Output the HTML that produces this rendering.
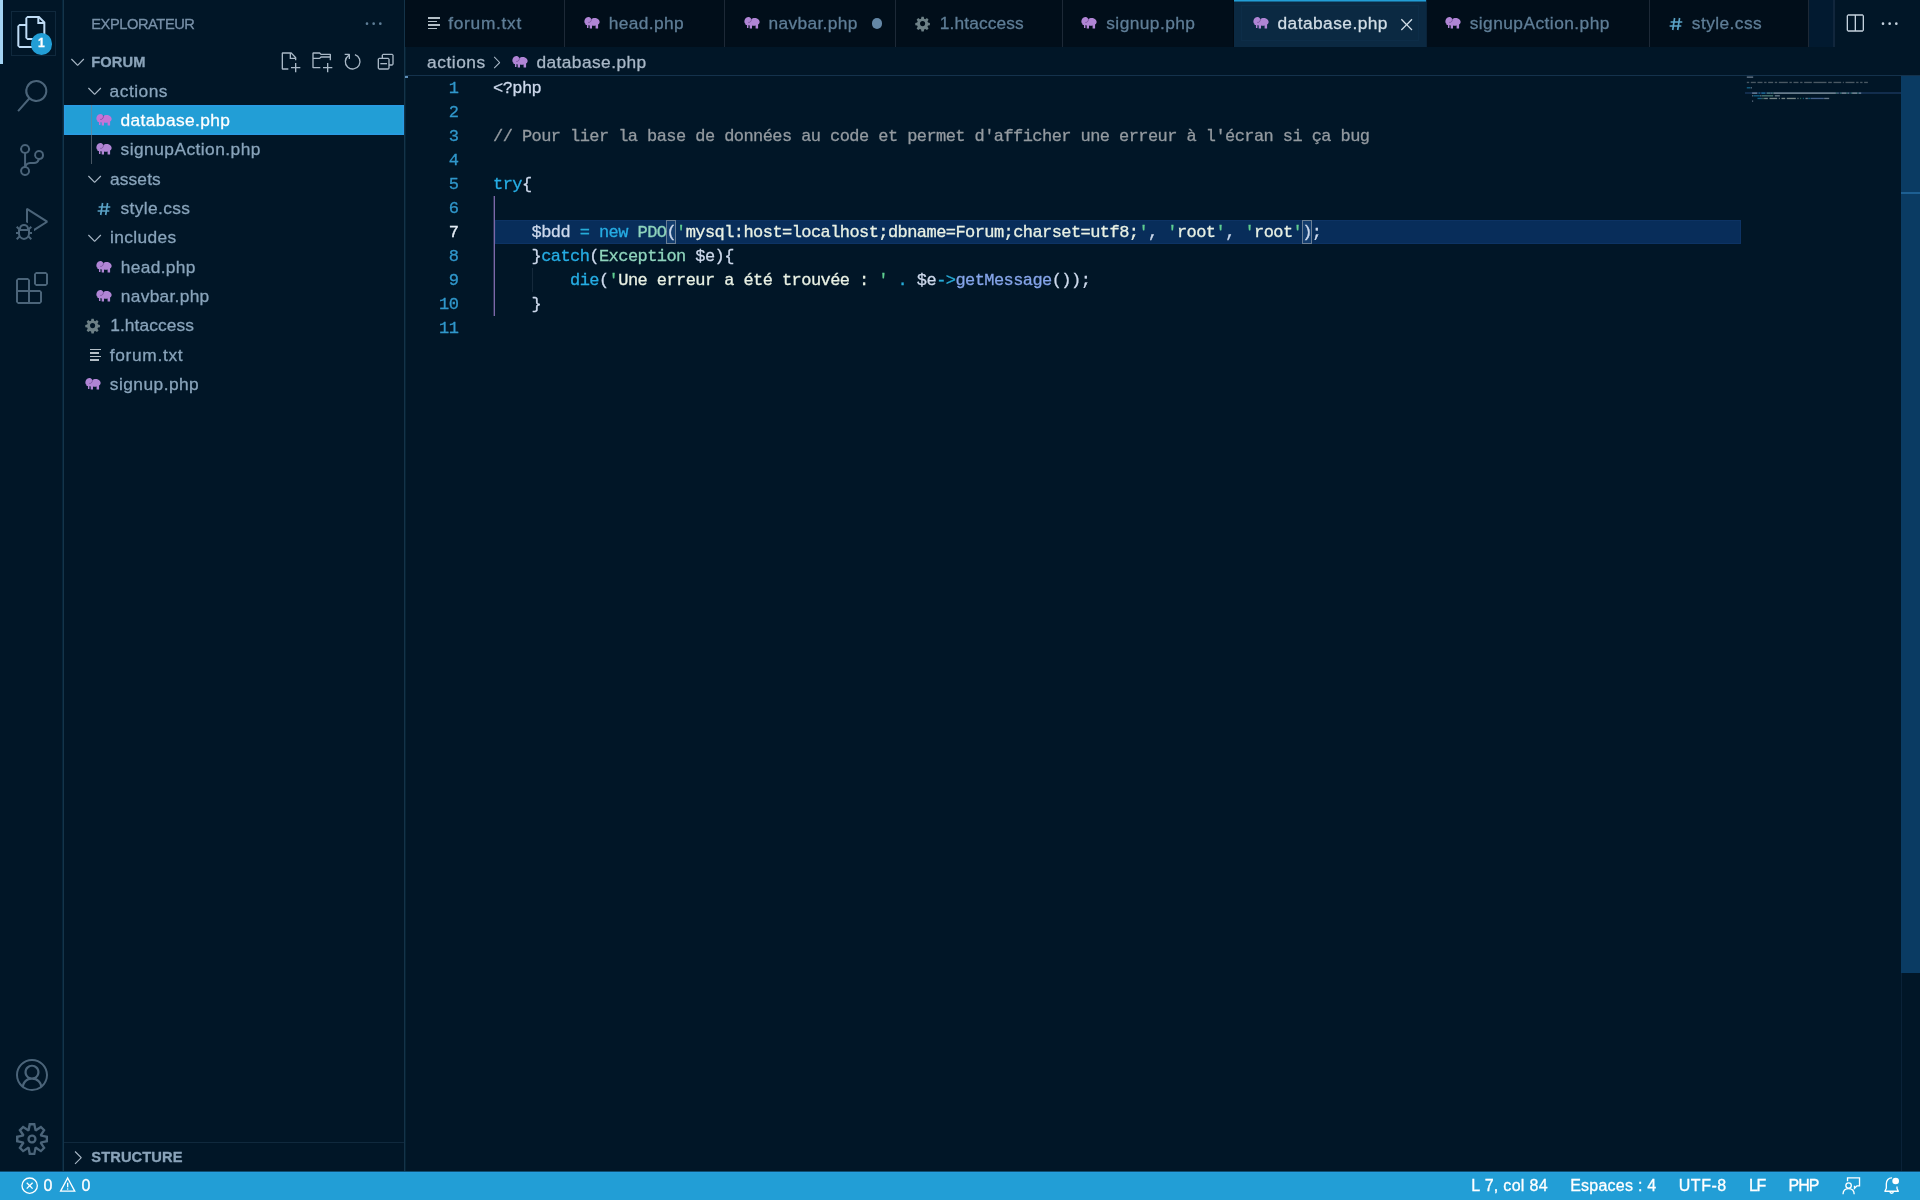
<!DOCTYPE html>
<html><head><meta charset="utf-8"><title>database.php — Forum</title>
<style>
html,body{margin:0;padding:0}
body{width:1920px;height:1200px;overflow:hidden;position:relative;background:#011627;font-family:"Liberation Sans",sans-serif;-webkit-font-smoothing:antialiased}
svg{display:block;overflow:visible}
#root{position:absolute;left:0;top:0;width:1920px;height:1200px;will-change:transform}
#root div{-webkit-text-stroke:.3px}
</style></head><body><div id="root">
<div style="position:absolute;left:63.00px;top:0.00px;width:1.00px;height:1171.00px;background:#153449;"></div>
<div style="position:absolute;left:62.00px;top:0.00px;width:1.00px;height:1171.00px;background:#04243a;"></div>
<div style="position:absolute;left:0.00px;top:0.00px;width:3.00px;height:64.00px;background:#a3d3f2;"></div>
<div style="position:absolute;left:11px;top:11px;width:45px;height:45px;border:1px solid #10293d;box-sizing:border-box"></div>
<svg style="position:absolute;left:16.00px;top:16.00px;color:#bfdcf5;" width="32.00" height="32.00" viewBox="0 0 24 24" fill="#bfdcf5"><path d="M17.5 0h-9L7 1.5V6H2.5L1 7.5v15.07L2.5 24h12.07L16 22.57V18h4.7l1.3-1.43V4.5L17.5 0zm0 2.12l2.38 2.38H17.5V2.12zm-3 20.38h-12v-15H7v9.07L8.5 18h6v4.5zm6-6h-12v-15H16V6h4.5v10.5z"/></svg>
<div style="position:absolute;left:30.5px;top:33px;width:21.5px;height:21.5px;border-radius:50%;background:#229ed6;color:#fff;font:bold 12px 'Liberation Sans',sans-serif;line-height:21.5px;text-align:center">1</div>
<svg style="position:absolute;left:16.00px;top:80.00px;color:#4b6479;" width="32.00" height="32.00" viewBox="0 0 24 24" fill="#4b6479"><path d="M15.25 0a8.25 8.25 0 0 0-6.18 13.72L1 22.88l1.12 1 8.05-9.12A8.251 8.251 0 1 0 15.25.01V0zm0 15a6.75 6.75 0 1 1 0-13.5 6.75 6.75 0 0 1 0 13.5z"/></svg>
<svg style="position:absolute;left:16.00px;top:144.00px;color:#4b6479;" width="32.00" height="32.00" viewBox="0 0 24 24" fill="#4b6479"><path d="M21.007 8.222A3.738 3.738 0 0 0 15.045 5.2a3.737 3.737 0 0 0 1.156 6.583 2.988 2.988 0 0 1-2.668 1.67h-2.99a4.456 4.456 0 0 0-2.989 1.165V7.4a3.737 3.737 0 1 0-1.494 0v9.117a3.776 3.776 0 1 0 1.816.099 2.99 2.99 0 0 1 2.668-1.667h2.99a4.484 4.484 0 0 0 4.223-3.039 3.736 3.736 0 0 0 3.25-3.687zM4.565 3.738a2.242 2.242 0 1 1 4.484 0 2.242 2.242 0 0 1-4.484 0zm4.484 16.441a2.242 2.242 0 1 1-4.484 0 2.242 2.242 0 0 1 4.484 0zm8.221-9.715a2.242 2.242 0 1 1 0-4.485 2.242 2.242 0 0 1 0 4.485z"/></svg>
<svg style="position:absolute;left:16.00px;top:208.00px;color:#4b6479;" width="32.00" height="32.00" viewBox="0 0 24 24" fill="#4b6479"><path d="M10.94 13.5l-1.32 1.32a3.73 3.73 0 0 0-7.24 0L1.06 13.5 0 14.56l1.72 1.72-.22.22V18H0v1.5h1.5v.08c.077.489.214.966.41 1.42L0 22.94 1.06 24l1.65-1.65A4.308 4.308 0 0 0 6 24a4.31 4.31 0 0 0 3.29-1.65L10.94 24 12 22.94 10.09 21c.198-.464.336-.951.41-1.45v-.1H12V18h-1.5v-1.5l-.22-.22L12 14.56l-1.06-1.06zM6 13.5a2.25 2.25 0 0 1 2.25 2.25h-4.5A2.25 2.25 0 0 1 6 13.5zm3 6a3.33 3.33 0 0 1-3 3 3.33 3.33 0 0 1-3-3v-2.25h6v2.25zm14.76-9.9v1.26L13.5 17.37V15.6l8.5-5.37L9 2v9.46a5.07 5.07 0 0 0-1.5-.72V.63L8.64 0l15.12 9.6z"/></svg>
<svg style="position:absolute;left:16.00px;top:272.00px;color:#4b6479;" width="32.00" height="32.00" viewBox="0 0 24 24" fill="#4b6479"><path d="M13.5 1.5L15 0h7.5L24 1.5V9l-1.5 1.5H15L13.5 9V1.5zm1.5 0V9h7.5V1.5H15zM0 15V6l1.5-1.5H9L10.5 6v7.5H18l1.5 1.5v7.5L18 24H1.5L0 22.5V15zm9-1.5V6H1.5v7.5H9zM9 15H1.5v7.5H9V15zm1.5 7.5H18V15h-7.5v7.5z"/></svg>
<svg style="position:absolute;left:16.00px;top:1058.67px;color:#4b6479;" width="32.00" height="32.00" viewBox="0 0 16 16" fill="#4b6479"><path d="M16 7.992C16 3.58 12.416 0 8 0S0 3.58 0 7.992c0 2.43 1.104 4.62 2.832 6.09.016.016.032.016.032.032.144.112.288.224.448.336.08.048.144.111.224.175A7.98 7.98 0 0 0 8.016 16a7.98 7.98 0 0 0 4.48-1.375c.08-.048.144-.111.224-.16.144-.111.304-.223.448-.335.016-.016.032-.016.032-.032 1.696-1.487 2.8-3.676 2.8-6.106zm-8 7.001c-1.504 0-2.88-.48-4.016-1.279.016-.128.048-.255.08-.383a4.17 4.17 0 0 1 .416-.991c.176-.304.384-.576.64-.816.24-.24.528-.463.816-.639.304-.176.624-.304.976-.4A4.15 4.15 0 0 1 8 10.342a4.185 4.185 0 0 1 2.928 1.166c.368.368.656.8.864 1.295.112.288.192.592.24.911A7.03 7.03 0 0 1 8 14.993zm-2.448-7.4a2.49 2.49 0 0 1-.208-1.024c0-.351.064-.703.208-1.023.144-.32.336-.607.576-.847.24-.24.528-.431.848-.575.32-.144.672-.208 1.024-.208.368 0 .704.064 1.024.208.32.144.608.336.848.575.24.24.432.528.576.847.144.32.208.672.208 1.023 0 .368-.064.704-.208 1.023a2.84 2.84 0 0 1-.576.848 2.84 2.84 0 0 1-.848.575 2.715 2.715 0 0 1-2.064 0 2.84 2.84 0 0 1-.848-.575 2.526 2.526 0 0 1-.56-.848zm7.424 5.306c0-.032-.016-.048-.016-.08a5.22 5.22 0 0 0-.688-1.406 4.883 4.883 0 0 0-1.088-1.135 5.207 5.207 0 0 0-1.04-.608 2.82 2.82 0 0 0 .464-.383 4.2 4.2 0 0 0 .624-.784 3.624 3.624 0 0 0 .528-1.934 3.71 3.71 0 0 0-.288-1.47 3.799 3.799 0 0 0-.816-1.199 3.845 3.845 0 0 0-1.2-.8 3.72 3.72 0 0 0-1.472-.287 3.72 3.72 0 0 0-1.472.288 3.631 3.631 0 0 0-1.2.815 3.84 3.84 0 0 0-.8 1.199 3.71 3.71 0 0 0-.288 1.47c0 .352.048.688.144 1.007.096.336.224.64.4.927.16.288.384.544.624.784.144.144.304.271.48.383a5.12 5.12 0 0 0-1.04.624c-.416.32-.784.703-1.088 1.119a4.999 4.999 0 0 0-.688 1.406c-.016.032-.016.064-.016.08C1.776 11.636.992 9.91.992 7.992.992 4.14 4.144.991 8 .991s7.008 3.149 7.008 7.001a6.96 6.96 0 0 1-2.032 4.907z"/></svg>
<svg style="position:absolute;left:16.00px;top:1122.67px;color:#4b6479;" width="32.00" height="32.00" viewBox="0 0 24 24" fill="#4b6479"><path fill-rule="evenodd" d="M19.85 8.75l4.15.83v4.84l-4.15.83 2.35 3.52-3.43 3.43-3.52-2.35-.83 4.15H9.58l-.83-4.15-3.52 2.35-3.43-3.43 2.35-3.52L0 14.42V9.58l4.15-.83L1.8 5.23 5.23 1.8l3.52 2.35L9.58 0h4.84l.83 4.15 3.52-2.35 3.43 3.43-2.35 3.52zm-1.57 5.07l4-.81v-2l-4-.81-.54-1.3 2.29-3.43-1.43-1.43-3.43 2.29-1.3-.54-.81-4h-2l-.81 4-1.3.54-3.43-2.29-1.43 1.43L6.38 8.9l-.54 1.3-4 .81v2l4 .81.54 1.3-2.29 3.43 1.43 1.43 3.43-2.29 1.3.54.81 4h2l.81-4 1.3-.54 3.43 2.29 1.43-1.43-2.29-3.43.54-1.3zm-8.186-4.672A3.43 3.43 0 0 1 12 8.57 3.44 3.44 0 0 1 15.43 12a3.43 3.43 0 1 1-5.336-2.852zm.956 4.274c.281.188.612.288.95.288A1.7 1.7 0 0 0 13.71 12a1.71 1.71 0 1 0-2.66 1.422z"/></svg>
<div style="position:absolute;left:404.00px;top:0.00px;width:1.00px;height:1171.00px;background:#143349;"></div>
<div style="position:absolute;left:405.00px;top:0.00px;width:1.00px;height:1171.00px;background:#052234;"></div>
<div style="position:absolute;left:91.25px;top:1.00px;height:46.67px;line-height:46.67px;font-size:14.67px;color:#7890a8;letter-spacing:-0.434px;font-weight:normal;white-space:pre;font-family:'Liberation Sans',sans-serif;">EXPLORATEUR</div>
<svg style="position:absolute;left:362.67px;top:13.33px;color:#5f7e97;" width="21.33" height="21.33" viewBox="0 0 16 16" fill="#5f7e97"><path d="M4 8a1 1 0 1 1-2 0 1 1 0 0 1 2 0zm5 0a1 1 0 1 1-2 0 1 1 0 0 1 2 0zm5 0a1 1 0 1 1-2 0 1 1 0 0 1 2 0z"/></svg>
<svg style="position:absolute;left:66.67px;top:50.67px;color:#a7b6c4;" width="21.33" height="21.33" viewBox="0 0 16 16" fill="#a7b6c4"><path d="M7.976 10.072l4.357-4.357.62.618L8.284 11h-.618L3 6.333l.619-.618 4.357 4.357z"/></svg>
<div style="position:absolute;left:91.30px;top:47.97px;height:29.33px;line-height:29.33px;font-size:14.67px;color:#8aa3b9;letter-spacing:0.087px;font-weight:bold;white-space:pre;font-family:'Liberation Sans',sans-serif;">FORUM</div>
<svg style="position:absolute;left:278.70px;top:51.30px;color:#a9b8c6;" width="21.33" height="21.33" viewBox="0 0 16 16" fill="#a9b8c6"><path d="M9.5 1.1l3.4 3.5.1.4v2h-1V6H8V2H3v11h4v1H2.5l-.5-.5v-12l.5-.5h6.7l.3.1zM9 2v3h2.9L9 2zm4 14h-1v-3H9v-1h3V9h1v3h3v1h-3v3z"/></svg>
<svg style="position:absolute;left:310.67px;top:51.30px;color:#a9b8c6;" width="21.33" height="21.33" viewBox="0 0 16 16" fill="#a9b8c6"><path d="M14.5 2H7.71l-.85-.85L6.51 1h-5l-.5.5v11l.5.5H7v-1H1.99V6h4.49l.35-.15.86-.86H14v1.5l-.001.51h1.011V2.5L14.5 2zm-.51 2h-6.5l-.35.15-.86.86H2v-3h4.29l.85.85.36.15H14l-.01.99zM13 16h-1v-3H9v-1h3V9h1v3h3v1h-3v3z"/></svg>
<svg style="position:absolute;left:342.00px;top:50.67px;color:#a9b8c6;" width="21.33" height="21.33" viewBox="0 0 16 16" fill="#a9b8c6"><path d="M4.681 3H2V2h3.5l.5.5V6H5V4a5 5 0 1 0 4.530-.761l.302-.954A6 6 0 1 1 4.681 3z"/></svg>
<svg style="position:absolute;left:374.50px;top:50.67px;color:#a9b8c6;" width="21.33" height="21.33" viewBox="0 0 16 16" fill="#a9b8c6"><path d="M9 9H4v1h5V9z"/><path fill-rule="evenodd" d="M5 3l1-1h7l1 1v7l-1 1h-2v2l-1 1H3l-1-1V6l1-1h2V3zm1 2h4l1 1v4h2V3H6v2zm4 1H3v7h7V6z"/></svg>
<svg style="position:absolute;left:83.80px;top:80.10px;color:#a7b6c4;" width="21.33" height="21.33" viewBox="0 0 16 16" fill="#a7b6c4"><path d="M7.976 10.072l4.357-4.357.62.618L8.284 11h-.618L3 6.333l.619-.618 4.357 4.357z"/></svg>
<div style="position:absolute;left:109.60px;top:76.70px;height:29.33px;line-height:29.33px;font-size:17.33px;color:#89a4bb;letter-spacing:0.492px;font-weight:normal;white-space:pre;font-family:'Liberation Sans',sans-serif;">actions</div>
<div style="position:absolute;left:64px;top:105.33px;width:340px;height:29.33px;background:#229ed6;box-shadow:inset 0 0 0 1.4px #2a9ce4"></div>
<svg style="position:absolute;left:95.60px;top:114.15px;color:#c574d6;" width="16.00" height="12.00" viewBox="0 0 16 12" fill="#c574d6"><path d="M7.300 2.300C8.600 1 11 .700 13 1.500c1.900.800 2.900 2.400 2.600 3.900-.2 1-.8 1.700-1.500 2.100V11.500h-2.500V8.400c-1.100.4-2.500.4-3.600.1V11.500H5.700V8.400l-1.200-.3-.1 3H3L2.900 8c-.9.300-1.700-.3-1.500-1.200C.4 6.200.1 4.500.6 3 1.200 1.200 3 0 4.800.100 6 .200 6.900 1.100 7.300 2.300z"/><path d="M7.300 1.200c.3 1.200 0 2.700-.8 3.500-.6.600-1.500.9-2.300.7" fill="none" stroke="#3a1a5c" stroke-opacity=".5" stroke-width=".75"/></svg>
<div style="position:absolute;left:120.50px;top:106.03px;height:29.33px;line-height:29.33px;font-size:17.33px;color:#ffffff;letter-spacing:0.405px;font-weight:normal;white-space:pre;font-family:'Liberation Sans',sans-serif;">database.php</div>
<svg style="position:absolute;left:95.70px;top:143.48px;color:#b085d5;" width="16.00" height="12.00" viewBox="0 0 16 12" fill="#b085d5"><path d="M7.300 2.300C8.600 1 11 .700 13 1.500c1.900.800 2.900 2.400 2.600 3.900-.2 1-.8 1.700-1.500 2.100V11.500h-2.500V8.400c-1.100.4-2.500.4-3.600.1V11.500H5.700V8.400l-1.200-.3-.1 3H3L2.900 8c-.9.300-1.700-.3-1.500-1.200C.4 6.200.1 4.500.6 3 1.200 1.200 3 0 4.800.100 6 .200 6.900 1.100 7.300 2.300z"/><path d="M7.300 1.200c.3 1.200 0 2.700-.8 3.500-.6.600-1.500.9-2.300.7" fill="none" stroke="#3a1a5c" stroke-opacity=".5" stroke-width=".75"/></svg>
<div style="position:absolute;left:120.60px;top:135.37px;height:29.33px;line-height:29.33px;font-size:17.33px;color:#89a4bb;letter-spacing:0.458px;font-weight:normal;white-space:pre;font-family:'Liberation Sans',sans-serif;">signupAction.php</div>
<svg style="position:absolute;left:83.80px;top:168.10px;color:#a7b6c4;" width="21.33" height="21.33" viewBox="0 0 16 16" fill="#a7b6c4"><path d="M7.976 10.072l4.357-4.357.62.618L8.284 11h-.618L3 6.333l.619-.618 4.357 4.357z"/></svg>
<div style="position:absolute;left:109.90px;top:164.70px;height:29.33px;line-height:29.33px;font-size:17.33px;color:#89a4bb;letter-spacing:0.161px;font-weight:normal;white-space:pre;font-family:'Liberation Sans',sans-serif;">assets</div>
<svg style="position:absolute;left:95.60px;top:200.60px;color:#5aa2c6;" width="16.00" height="16.00" viewBox="0 0 16 16" fill="#5aa2c6"><path d="M6.600 2L4.700 14M11.600 2L9.700 14M2.600 6h11.700M1.600 10h11.700" fill="none" stroke="currentColor" stroke-width="1.650"/></svg>
<div style="position:absolute;left:120.50px;top:194.03px;height:29.33px;line-height:29.33px;font-size:17.33px;color:#89a4bb;letter-spacing:0.378px;font-weight:normal;white-space:pre;font-family:'Liberation Sans',sans-serif;">style.css</div>
<svg style="position:absolute;left:83.80px;top:226.77px;color:#a7b6c4;" width="21.33" height="21.33" viewBox="0 0 16 16" fill="#a7b6c4"><path d="M7.976 10.072l4.357-4.357.62.618L8.284 11h-.618L3 6.333l.619-.618 4.357 4.357z"/></svg>
<div style="position:absolute;left:110.00px;top:223.37px;height:29.33px;line-height:29.33px;font-size:17.33px;color:#89a4bb;letter-spacing:0.370px;font-weight:normal;white-space:pre;font-family:'Liberation Sans',sans-serif;">includes</div>
<svg style="position:absolute;left:95.90px;top:260.82px;color:#b085d5;" width="16.00" height="12.00" viewBox="0 0 16 12" fill="#b085d5"><path d="M7.300 2.300C8.600 1 11 .700 13 1.500c1.900.800 2.900 2.400 2.600 3.900-.2 1-.8 1.700-1.500 2.100V11.500h-2.500V8.400c-1.100.4-2.500.4-3.600.1V11.500H5.700V8.400l-1.200-.3-.1 3H3L2.900 8c-.9.300-1.700-.3-1.500-1.200C.4 6.200.1 4.500.6 3 1.200 1.200 3 0 4.800.100 6 .200 6.900 1.100 7.300 2.300z"/><path d="M7.300 1.200c.3 1.200 0 2.700-.8 3.500-.6.600-1.500.9-2.300.7" fill="none" stroke="#3a1a5c" stroke-opacity=".5" stroke-width=".75"/></svg>
<div style="position:absolute;left:120.80px;top:252.70px;height:29.33px;line-height:29.33px;font-size:17.33px;color:#89a4bb;letter-spacing:0.331px;font-weight:normal;white-space:pre;font-family:'Liberation Sans',sans-serif;">head.php</div>
<svg style="position:absolute;left:95.90px;top:290.15px;color:#b085d5;" width="16.00" height="12.00" viewBox="0 0 16 12" fill="#b085d5"><path d="M7.300 2.300C8.600 1 11 .700 13 1.500c1.900.800 2.900 2.400 2.600 3.900-.2 1-.8 1.700-1.500 2.100V11.500h-2.500V8.400c-1.100.4-2.500.4-3.600.1V11.500H5.700V8.400l-1.200-.3-.1 3H3L2.900 8c-.9.300-1.700-.3-1.500-1.200C.4 6.200.1 4.500.6 3 1.200 1.200 3 0 4.800.100 6 .200 6.900 1.100 7.300 2.300z"/><path d="M7.300 1.200c.3 1.200 0 2.700-.8 3.500-.6.600-1.500.9-2.300.7" fill="none" stroke="#3a1a5c" stroke-opacity=".5" stroke-width=".75"/></svg>
<div style="position:absolute;left:120.80px;top:282.03px;height:29.33px;line-height:29.33px;font-size:17.33px;color:#89a4bb;letter-spacing:0.300px;font-weight:normal;white-space:pre;font-family:'Liberation Sans',sans-serif;">navbar.php</div>
<svg style="position:absolute;left:85.10px;top:317.93px;color:#6d8086;" width="15.20" height="15.20" viewBox="0 0 16 16" fill="#6d8086"><path fill-rule="evenodd" d="M6.800.8h2.400l.4 2 1.300.55 1.700-1.150 1.700 1.700-1.150 1.700.55 1.300 2 .4v2.400l-2 .4-.55 1.300 1.150 1.700-1.700 1.700-1.700-1.150-1.300.55-.4 2H6.800l-.4-2-1.300-.55-1.700 1.150-1.700-1.700 1.150-1.700-.55-1.300-2-.4V7.300l2-.4.55-1.300L1.700 3.900l1.700-1.700 1.700 1.150 1.300-.55zM8 5.300a2.700 2.700 0 1 0 0 5.400 2.700 2.700 0 0 0 0-5.400z"/></svg>
<div style="position:absolute;left:110.20px;top:311.37px;height:29.33px;line-height:29.33px;font-size:17.33px;color:#89a4bb;letter-spacing:0.105px;font-weight:normal;white-space:pre;font-family:'Liberation Sans',sans-serif;">1.htaccess</div>
<div style="position:absolute;left:90.10px;top:348.87px;width:11.30px;height:1.60px;background:#b4bfc7;"></div>
<div style="position:absolute;left:90.10px;top:352.32px;width:8.50px;height:1.60px;background:#b4bfc7;"></div>
<div style="position:absolute;left:90.10px;top:355.77px;width:11.30px;height:1.60px;background:#b4bfc7;"></div>
<div style="position:absolute;left:90.10px;top:359.22px;width:8.50px;height:1.60px;background:#b4bfc7;"></div>
<div style="position:absolute;left:109.70px;top:340.70px;height:29.33px;line-height:29.33px;font-size:17.33px;color:#89a4bb;letter-spacing:0.684px;font-weight:normal;white-space:pre;font-family:'Liberation Sans',sans-serif;">forum.txt</div>
<svg style="position:absolute;left:84.90px;top:378.15px;color:#b085d5;" width="16.00" height="12.00" viewBox="0 0 16 12" fill="#b085d5"><path d="M7.300 2.300C8.600 1 11 .700 13 1.500c1.900.800 2.900 2.400 2.600 3.900-.2 1-.8 1.700-1.500 2.100V11.500h-2.500V8.400c-1.100.4-2.500.4-3.600.1V11.500H5.700V8.400l-1.200-.3-.1 3H3L2.900 8c-.9.300-1.700-.3-1.500-1.200C.4 6.200.1 4.500.6 3 1.200 1.200 3 0 4.800.100 6 .200 6.900 1.100 7.300 2.300z"/><path d="M7.300 1.200c.3 1.200 0 2.700-.8 3.500-.6.600-1.500.9-2.300.7" fill="none" stroke="#3a1a5c" stroke-opacity=".5" stroke-width=".75"/></svg>
<div style="position:absolute;left:109.80px;top:370.03px;height:29.33px;line-height:29.33px;font-size:17.33px;color:#89a4bb;letter-spacing:0.461px;font-weight:normal;white-space:pre;font-family:'Liberation Sans',sans-serif;">signup.php</div>
<div style="position:absolute;left:91.00px;top:105.33px;width:1.00px;height:58.67px;background:rgba(120,130,140,.6);"></div>
<div style="position:absolute;left:64.00px;top:1141.50px;width:340.00px;height:1.00px;background:#10293d;"></div>
<svg style="position:absolute;left:66.67px;top:1146.50px;color:#a7b6c4;" width="21.33" height="21.33" viewBox="0 0 16 16" fill="#a7b6c4"><path d="M10.072 8.024L5.715 3.667l.618-.62L11 7.716v.618L6.333 13l-.618-.619 4.357-4.357z"/></svg>
<div style="position:absolute;left:91.30px;top:1142.80px;height:29.33px;line-height:29.33px;font-size:14.67px;color:#8aa3b9;letter-spacing:0.098px;font-weight:bold;white-space:pre;font-family:'Liberation Sans',sans-serif;">STRUCTURE</div>
<div style="position:absolute;left:405.00px;top:0.00px;width:1515.00px;height:46.67px;background:#011627;"></div>
<div style="position:absolute;left:405.00px;top:0.00px;width:159.00px;height:46.67px;background:#010e1a;"></div>
<div style="position:absolute;left:564.00px;top:0.00px;width:1.00px;height:46.67px;background:#1d2937;"></div>
<div style="position:absolute;left:428.40px;top:17.20px;width:11.30px;height:1.60px;background:#b4bfc7;"></div>
<div style="position:absolute;left:428.40px;top:20.65px;width:8.50px;height:1.60px;background:#b4bfc7;"></div>
<div style="position:absolute;left:428.40px;top:24.10px;width:11.30px;height:1.60px;background:#b4bfc7;"></div>
<div style="position:absolute;left:428.40px;top:27.55px;width:8.50px;height:1.60px;background:#b4bfc7;"></div>
<div style="position:absolute;left:448.25px;top:0.00px;height:46.67px;line-height:46.67px;font-size:17.33px;color:#5f7e97;letter-spacing:0.697px;font-weight:normal;white-space:pre;font-family:'Liberation Sans',sans-serif;">forum.txt</div>
<div style="position:absolute;left:565.00px;top:0.00px;width:159.00px;height:46.67px;background:#010e1a;"></div>
<div style="position:absolute;left:724.00px;top:0.00px;width:1.00px;height:46.67px;background:#1d2937;"></div>
<svg style="position:absolute;left:583.85px;top:17.15px;color:#b085d5;" width="16.00" height="12.00" viewBox="0 0 16 12" fill="#b085d5"><path d="M7.300 2.300C8.600 1 11 .700 13 1.500c1.900.800 2.900 2.400 2.600 3.900-.2 1-.8 1.700-1.500 2.100V11.500h-2.500V8.400c-1.100.4-2.500.4-3.600.1V11.500H5.700V8.400l-1.200-.3-.1 3H3L2.900 8c-.9.300-1.700-.3-1.500-1.200C.4 6.200.1 4.500.6 3 1.200 1.200 3 0 4.800.100 6 .200 6.900 1.100 7.300 2.300z"/><path d="M7.300 1.200c.3 1.200 0 2.700-.8 3.500-.6.600-1.500.9-2.300.7" fill="none" stroke="#3a1a5c" stroke-opacity=".5" stroke-width=".75"/></svg>
<div style="position:absolute;left:608.75px;top:0.00px;height:46.67px;line-height:46.67px;font-size:17.33px;color:#5f7e97;letter-spacing:0.389px;font-weight:normal;white-space:pre;font-family:'Liberation Sans',sans-serif;">head.php</div>
<div style="position:absolute;left:725.00px;top:0.00px;width:170.00px;height:46.67px;background:#010e1a;"></div>
<div style="position:absolute;left:895.00px;top:0.00px;width:1.00px;height:46.67px;background:#1d2937;"></div>
<svg style="position:absolute;left:743.50px;top:17.15px;color:#b085d5;" width="16.00" height="12.00" viewBox="0 0 16 12" fill="#b085d5"><path d="M7.300 2.300C8.600 1 11 .700 13 1.500c1.900.800 2.900 2.400 2.600 3.900-.2 1-.8 1.700-1.500 2.100V11.500h-2.500V8.400c-1.100.4-2.500.4-3.600.1V11.500H5.700V8.400l-1.200-.3-.1 3H3L2.900 8c-.9.300-1.700-.3-1.500-1.200C.4 6.200.1 4.500.6 3 1.200 1.200 3 0 4.800.100 6 .200 6.900 1.100 7.300 2.300z"/><path d="M7.300 1.200c.3 1.200 0 2.700-.8 3.500-.6.600-1.500.9-2.300.7" fill="none" stroke="#3a1a5c" stroke-opacity=".5" stroke-width=".75"/></svg>
<div style="position:absolute;left:768.40px;top:0.00px;height:46.67px;line-height:46.67px;font-size:17.33px;color:#5f7e97;letter-spacing:0.367px;font-weight:normal;white-space:pre;font-family:'Liberation Sans',sans-serif;">navbar.php</div>
<div style="position:absolute;left:896.00px;top:0.00px;width:166.00px;height:46.67px;background:#010e1a;"></div>
<div style="position:absolute;left:1062.00px;top:0.00px;width:1.00px;height:46.67px;background:#1d2937;"></div>
<svg style="position:absolute;left:915.30px;top:15.60px;color:#6d8086;" width="15.20" height="15.20" viewBox="0 0 16 16" fill="#6d8086"><path fill-rule="evenodd" d="M6.800.8h2.400l.4 2 1.300.55 1.700-1.150 1.700 1.700-1.150 1.700.55 1.300 2 .4v2.400l-2 .4-.55 1.300 1.150 1.700-1.700 1.700-1.700-1.150-1.300.55-.4 2H6.800l-.4-2-1.300-.55-1.700 1.150-1.700-1.700 1.150-1.700-.55-1.300-2-.4V7.300l2-.4.55-1.300L1.700 3.900l1.700-1.700 1.700 1.150 1.300-.55zM8 5.300a2.700 2.700 0 1 0 0 5.400 2.700 2.700 0 0 0 0-5.400z"/></svg>
<div style="position:absolute;left:939.80px;top:0.00px;height:46.67px;line-height:46.67px;font-size:17.33px;color:#5f7e97;letter-spacing:0.122px;font-weight:normal;white-space:pre;font-family:'Liberation Sans',sans-serif;">1.htaccess</div>
<div style="position:absolute;left:1063.00px;top:0.00px;width:170.00px;height:46.67px;background:#010e1a;"></div>
<div style="position:absolute;left:1233.00px;top:0.00px;width:1.00px;height:46.67px;background:#010912;"></div>
<svg style="position:absolute;left:1081.35px;top:17.15px;color:#b085d5;" width="16.00" height="12.00" viewBox="0 0 16 12" fill="#b085d5"><path d="M7.300 2.300C8.600 1 11 .700 13 1.500c1.900.800 2.900 2.400 2.600 3.900-.2 1-.8 1.700-1.500 2.100V11.500h-2.500V8.400c-1.100.4-2.500.4-3.600.1V11.500H5.700V8.400l-1.200-.3-.1 3H3L2.900 8c-.9.300-1.700-.3-1.500-1.200C.4 6.200.1 4.500.6 3 1.200 1.200 3 0 4.800.100 6 .200 6.900 1.100 7.300 2.300z"/><path d="M7.300 1.200c.3 1.200 0 2.700-.8 3.500-.6.600-1.500.9-2.300.7" fill="none" stroke="#3a1a5c" stroke-opacity=".5" stroke-width=".75"/></svg>
<div style="position:absolute;left:1106.25px;top:0.00px;height:46.67px;line-height:46.67px;font-size:17.33px;color:#5f7e97;letter-spacing:0.434px;font-weight:normal;white-space:pre;font-family:'Liberation Sans',sans-serif;">signup.php</div>
<div style="position:absolute;left:1234.00px;top:0.00px;width:192.00px;height:46.67px;background:#0b2942;"></div>
<div style="position:absolute;left:1426.00px;top:0.00px;width:1.00px;height:46.67px;background:#0a2339;"></div>
<div style="position:absolute;left:1234.00px;top:0.00px;width:192.00px;height:1.00px;background:#229ed6;"></div>
<div style="position:absolute;left:1234.00px;top:1.00px;width:192.00px;height:1.00px;background:#17668f;"></div>
<div style="position:absolute;left:1241px;top:5px;width:178px;height:36px;border:1px solid #0d2d48;box-sizing:border-box"></div>
<svg style="position:absolute;left:1252.60px;top:17.15px;color:#b085d5;" width="16.00" height="12.00" viewBox="0 0 16 12" fill="#b085d5"><path d="M7.300 2.300C8.600 1 11 .700 13 1.500c1.900.800 2.900 2.400 2.600 3.900-.2 1-.8 1.700-1.500 2.100V11.500h-2.500V8.400c-1.100.4-2.500.4-3.600.1V11.500H5.700V8.400l-1.200-.3-.1 3H3L2.900 8c-.9.300-1.700-.3-1.500-1.200C.4 6.200.1 4.500.6 3 1.200 1.200 3 0 4.800.100 6 .200 6.900 1.100 7.300 2.300z"/><path d="M7.300 1.200c.3 1.200 0 2.700-.8 3.500-.6.600-1.500.9-2.300.7" fill="none" stroke="#3a1a5c" stroke-opacity=".5" stroke-width=".75"/></svg>
<div style="position:absolute;left:1277.50px;top:0.00px;height:46.67px;line-height:46.67px;font-size:17.33px;color:#d2dee7;letter-spacing:0.451px;font-weight:normal;white-space:pre;font-family:'Liberation Sans',sans-serif;">database.php</div>
<div style="position:absolute;left:1427.00px;top:0.00px;width:222.00px;height:46.67px;background:#010e1a;"></div>
<div style="position:absolute;left:1649.00px;top:0.00px;width:1.00px;height:46.67px;background:#1d2937;"></div>
<svg style="position:absolute;left:1444.80px;top:17.15px;color:#b085d5;" width="16.00" height="12.00" viewBox="0 0 16 12" fill="#b085d5"><path d="M7.300 2.300C8.600 1 11 .700 13 1.500c1.900.800 2.900 2.400 2.600 3.900-.2 1-.8 1.700-1.500 2.100V11.500h-2.500V8.400c-1.100.4-2.500.4-3.600.1V11.500H5.700V8.400l-1.200-.3-.1 3H3L2.900 8c-.9.300-1.700-.3-1.500-1.200C.4 6.200.1 4.500.6 3 1.200 1.200 3 0 4.800.100 6 .200 6.900 1.100 7.300 2.300z"/><path d="M7.300 1.200c.3 1.200 0 2.700-.8 3.500-.6.600-1.500.9-2.300.7" fill="none" stroke="#3a1a5c" stroke-opacity=".5" stroke-width=".75"/></svg>
<div style="position:absolute;left:1469.70px;top:0.00px;height:46.67px;line-height:46.67px;font-size:17.33px;color:#5f7e97;letter-spacing:0.451px;font-weight:normal;white-space:pre;font-family:'Liberation Sans',sans-serif;">signupAction.php</div>
<div style="position:absolute;left:1650.00px;top:0.00px;width:158.00px;height:46.67px;background:#010e1a;"></div>
<div style="position:absolute;left:1808.00px;top:0.00px;width:1.00px;height:46.67px;background:#1d2937;"></div>
<svg style="position:absolute;left:1667.60px;top:15.60px;color:#5aa2c6;" width="16.00" height="16.00" viewBox="0 0 16 16" fill="#5aa2c6"><path d="M6.600 2L4.700 14M11.600 2L9.700 14M2.600 6h11.700M1.600 10h11.700" fill="none" stroke="currentColor" stroke-width="1.650"/></svg>
<div style="position:absolute;left:1691.80px;top:0.00px;height:46.67px;line-height:46.67px;font-size:17.33px;color:#5f7e97;letter-spacing:0.428px;font-weight:normal;white-space:pre;font-family:'Liberation Sans',sans-serif;">style.css</div>
<div style="position:absolute;left:871.6px;top:18.4px;width:10.6px;height:10.6px;border-radius:50%;background:#6487a6"></div>
<svg style="position:absolute;left:1395.50px;top:13.80px;color:#d2dee7;" width="21.33" height="21.33" viewBox="0 0 16 16" fill="#d2dee7"><path d="M8 8.707l3.646 3.647.708-.707L8.707 8l3.647-3.646-.707-.708L8 7.293 4.354 3.646l-.707.708L7.293 8l-3.646 3.646.707.708L8 8.707z"/></svg>
<div style="position:absolute;left:1809.00px;top:0.00px;width:24.50px;height:46.67px;background:#021a30;"></div>
<div style="position:absolute;left:1833.30px;top:0.00px;width:1.30px;height:46.67px;background:#11263c;"></div>
<svg style="position:absolute;left:1844.30px;top:13.20px;color:#c5d2de;" width="21.33" height="21.33" viewBox="0 0 16 16" fill="#c5d2de"><path d="M14 1H3L2 2v11l1 1h11l1-1V2l-1-1zM8 13H3V2h5v11zm6 0H9V2h5v11z"/></svg>
<svg style="position:absolute;left:1879.00px;top:13.33px;color:#c5d2de;" width="21.33" height="21.33" viewBox="0 0 16 16" fill="#c5d2de"><path d="M4 8a1 1 0 1 1-2 0 1 1 0 0 1 2 0zm5 0a1 1 0 1 1-2 0 1 1 0 0 1 2 0zm5 0a1 1 0 1 1-2 0 1 1 0 0 1 2 0z"/></svg>
<div style="position:absolute;left:427.10px;top:47.67px;height:29.33px;line-height:29.33px;font-size:17.33px;color:#a9b8c7;letter-spacing:0.534px;font-weight:normal;white-space:pre;font-family:'Liberation Sans',sans-serif;">actions</div>
<svg style="position:absolute;left:486.60px;top:52.80px;color:#a9b8c7;" width="19.00" height="19.00" viewBox="0 0 16 16" fill="#a9b8c7"><path d="M10.072 8.024L5.715 3.667l.618-.62L11 7.716v.618L6.333 13l-.618-.619 4.357-4.357z"/></svg>
<svg style="position:absolute;left:511.50px;top:56.08px;color:#b085d5;" width="16.00" height="12.00" viewBox="0 0 16 12" fill="#b085d5"><path d="M7.300 2.300C8.600 1 11 .700 13 1.500c1.900.800 2.900 2.400 2.600 3.900-.2 1-.8 1.700-1.500 2.100V11.500h-2.500V8.400c-1.100.4-2.500.4-3.600.1V11.500H5.700V8.400l-1.200-.3-.1 3H3L2.900 8c-.9.300-1.700-.3-1.500-1.200C.4 6.200.1 4.500.6 3 1.200 1.200 3 0 4.800.100 6 .200 6.900 1.100 7.300 2.300z"/><path d="M7.300 1.200c.3 1.200 0 2.700-.8 3.500-.6.600-1.500.9-2.300.7" fill="none" stroke="#3a1a5c" stroke-opacity=".5" stroke-width=".75"/></svg>
<div style="position:absolute;left:536.40px;top:47.67px;height:29.33px;line-height:29.33px;font-size:17.33px;color:#a9b8c7;letter-spacing:0.437px;font-weight:normal;white-space:pre;font-family:'Liberation Sans',sans-serif;">database.php</div>
<div style="position:absolute;left:405.00px;top:75.00px;width:1515.00px;height:1.00px;background:#14324c;"></div>
<div style="position:absolute;left:495.00px;top:220.00px;width:1246.00px;height:24.00px;background:#082d5a;box-shadow:inset 0 0 0 1px #0d3364"></div>
<div style="position:absolute;left:665.88px;top:220px;width:10.23px;height:24px;border:1px solid #6a7f96;background:#143d6e;box-sizing:border-box"></div>
<div style="position:absolute;left:1301.59px;top:220px;width:10.23px;height:24px;border:1px solid #6a7f96;background:#143d6e;box-sizing:border-box"></div>
<div style="position:absolute;left:494.00px;top:196.00px;width:1.00px;height:120.00px;background:#7b68a8;"></div>
<div style="position:absolute;left:493.00px;top:196.00px;width:1.00px;height:120.00px;background:#2e3356;"></div>
<div style="position:absolute;left:532.30px;top:268.00px;width:1.00px;height:24.00px;background:#15293b;"></div>
<div style="position:absolute;left:448.67px;top:77.00px;height:24.00px;line-height:24.00px;font-size:17.00px;color:#3097cb;letter-spacing:-0.570px;font-weight:normal;white-space:pre;font-family:'Liberation Mono',monospace;">1</div>
<div style="position:absolute;left:493.00px;top:77.00px;height:24.00px;line-height:24.00px;font-size:17.00px;color:#cdd9ec;letter-spacing:-0.570px;font-weight:normal;white-space:pre;font-family:'Liberation Mono',monospace;"><span style="color:#cdd9ec">&lt;?php</span></div>
<div style="position:absolute;left:448.67px;top:101.00px;height:24.00px;line-height:24.00px;font-size:17.00px;color:#3097cb;letter-spacing:-0.570px;font-weight:normal;white-space:pre;font-family:'Liberation Mono',monospace;">2</div>
<div style="position:absolute;left:448.67px;top:125.00px;height:24.00px;line-height:24.00px;font-size:17.00px;color:#3097cb;letter-spacing:-0.570px;font-weight:normal;white-space:pre;font-family:'Liberation Mono',monospace;">3</div>
<div style="position:absolute;left:493.00px;top:125.00px;height:24.00px;line-height:24.00px;font-size:17.00px;color:#cdd9ec;letter-spacing:-0.570px;font-weight:normal;white-space:pre;font-family:'Liberation Mono',monospace;"><span style="color:#939aa0">// Pour lier la base de données au code et permet d'afficher une erreur à l'écran si ça bug</span></div>
<div style="position:absolute;left:448.67px;top:149.00px;height:24.00px;line-height:24.00px;font-size:17.00px;color:#3097cb;letter-spacing:-0.570px;font-weight:normal;white-space:pre;font-family:'Liberation Mono',monospace;">4</div>
<div style="position:absolute;left:448.67px;top:173.00px;height:24.00px;line-height:24.00px;font-size:17.00px;color:#3097cb;letter-spacing:-0.570px;font-weight:normal;white-space:pre;font-family:'Liberation Mono',monospace;">5</div>
<div style="position:absolute;left:493.00px;top:173.00px;height:24.00px;line-height:24.00px;font-size:17.00px;color:#cdd9ec;letter-spacing:-0.570px;font-weight:normal;white-space:pre;font-family:'Liberation Mono',monospace;"><span style="color:#26ade4">try</span><span style="color:#cdd9ec">{</span></div>
<div style="position:absolute;left:448.67px;top:197.00px;height:24.00px;line-height:24.00px;font-size:17.00px;color:#3097cb;letter-spacing:-0.570px;font-weight:normal;white-space:pre;font-family:'Liberation Mono',monospace;">6</div>
<div style="position:absolute;left:448.67px;top:221.00px;height:24.00px;line-height:24.00px;font-size:17.00px;color:#e3ecf4;letter-spacing:-0.570px;font-weight:normal;white-space:pre;font-family:'Liberation Mono',monospace;">7</div>
<div style="position:absolute;left:493.00px;top:221.00px;height:24.00px;line-height:24.00px;font-size:17.00px;color:#cdd9ec;letter-spacing:-0.570px;font-weight:normal;white-space:pre;font-family:'Liberation Mono',monospace;"><span style="color:#cdd9ec">    $bdd </span><span style="color:#27acd8">=</span><span style="color:#cdd9ec"> </span><span style="color:#26ade4">new</span><span style="color:#cdd9ec"> </span><span style="color:#8fd5bd">PDO</span><span style="color:#cdd9ec">(</span><span style="color:#5fce90">'</span><span style="color:#e9f1e4">mysql:host=localhost;dbname=Forum;charset=utf8;</span><span style="color:#5fce90">'</span><span style="color:#cdd9ec">, </span><span style="color:#5fce90">'</span><span style="color:#e9f1e4">root</span><span style="color:#5fce90">'</span><span style="color:#cdd9ec">, </span><span style="color:#5fce90">'</span><span style="color:#e9f1e4">root</span><span style="color:#5fce90">'</span><span style="color:#cdd9ec">);</span></div>
<div style="position:absolute;left:448.67px;top:245.00px;height:24.00px;line-height:24.00px;font-size:17.00px;color:#3097cb;letter-spacing:-0.570px;font-weight:normal;white-space:pre;font-family:'Liberation Mono',monospace;">8</div>
<div style="position:absolute;left:493.00px;top:245.00px;height:24.00px;line-height:24.00px;font-size:17.00px;color:#cdd9ec;letter-spacing:-0.570px;font-weight:normal;white-space:pre;font-family:'Liberation Mono',monospace;"><span style="color:#cdd9ec">    }</span><span style="color:#26ade4">catch</span><span style="color:#cdd9ec">(</span><span style="color:#8fd5bd">Exception</span><span style="color:#cdd9ec"> $e){</span></div>
<div style="position:absolute;left:448.67px;top:269.00px;height:24.00px;line-height:24.00px;font-size:17.00px;color:#3097cb;letter-spacing:-0.570px;font-weight:normal;white-space:pre;font-family:'Liberation Mono',monospace;">9</div>
<div style="position:absolute;left:493.00px;top:269.00px;height:24.00px;line-height:24.00px;font-size:17.00px;color:#cdd9ec;letter-spacing:-0.570px;font-weight:normal;white-space:pre;font-family:'Liberation Mono',monospace;"><span style="color:#cdd9ec">        </span><span style="color:#26ade4">die</span><span style="color:#cdd9ec">(</span><span style="color:#5fce90">'</span><span style="color:#e9f1e4">Une erreur a été trouvée : </span><span style="color:#5fce90">'</span><span style="color:#cdd9ec"> </span><span style="color:#27acd8">.</span><span style="color:#cdd9ec"> $e</span><span style="color:#27acd8">-&gt;</span><span style="color:#86a5ea">getMessage</span><span style="color:#cdd9ec">());</span></div>
<div style="position:absolute;left:439.04px;top:293.00px;height:24.00px;line-height:24.00px;font-size:17.00px;color:#3097cb;letter-spacing:-0.570px;font-weight:normal;white-space:pre;font-family:'Liberation Mono',monospace;">10</div>
<div style="position:absolute;left:493.00px;top:293.00px;height:24.00px;line-height:24.00px;font-size:17.00px;color:#cdd9ec;letter-spacing:-0.570px;font-weight:normal;white-space:pre;font-family:'Liberation Mono',monospace;"><span style="color:#cdd9ec">    }</span></div>
<div style="position:absolute;left:439.04px;top:317.00px;height:24.00px;line-height:24.00px;font-size:17.00px;color:#3097cb;letter-spacing:-0.570px;font-weight:normal;white-space:pre;font-family:'Liberation Mono',monospace;">11</div>
<div style="position:absolute;left:1745.00px;top:91.90px;width:156.00px;height:2.40px;background:#122d4d;"></div>
<svg style="position:absolute;left:1745px;top:76px;opacity:.5" width="156" height="40" viewBox="0 0 156 40"><rect x="1.80" y="0.45" width="6.37" height="1.35" fill="#cdd9ec"/><rect x="1.80" y="5.78" width="2.37" height="1.35" fill="#939aa0"/><rect x="5.80" y="5.78" width="5.03" height="1.35" fill="#939aa0"/><rect x="12.47" y="5.78" width="5.03" height="1.35" fill="#939aa0"/><rect x="19.14" y="5.78" width="2.37" height="1.35" fill="#939aa0"/><rect x="23.14" y="5.78" width="5.03" height="1.35" fill="#939aa0"/><rect x="29.80" y="5.78" width="2.37" height="1.35" fill="#939aa0"/><rect x="33.80" y="5.78" width="9.03" height="1.35" fill="#939aa0"/><rect x="44.47" y="5.78" width="2.37" height="1.35" fill="#939aa0"/><rect x="48.47" y="5.78" width="5.03" height="1.35" fill="#939aa0"/><rect x="55.14" y="5.78" width="2.37" height="1.35" fill="#939aa0"/><rect x="59.14" y="5.78" width="7.70" height="1.35" fill="#939aa0"/><rect x="68.47" y="5.78" width="13.03" height="1.35" fill="#939aa0"/><rect x="83.14" y="5.78" width="3.70" height="1.35" fill="#939aa0"/><rect x="88.48" y="5.78" width="7.70" height="1.35" fill="#939aa0"/><rect x="97.81" y="5.78" width="1.03" height="1.35" fill="#939aa0"/><rect x="100.48" y="5.78" width="9.03" height="1.35" fill="#939aa0"/><rect x="111.15" y="5.78" width="2.37" height="1.35" fill="#939aa0"/><rect x="115.15" y="5.78" width="2.37" height="1.35" fill="#939aa0"/><rect x="119.15" y="5.78" width="3.70" height="1.35" fill="#939aa0"/><rect x="1.80" y="11.12" width="3.70" height="1.35" fill="#26ade4"/><rect x="5.80" y="11.12" width="1.03" height="1.35" fill="#cdd9ec"/><rect x="7.13" y="16.45" width="5.03" height="1.35" fill="#cdd9ec"/><rect x="13.80" y="16.45" width="1.03" height="1.35" fill="#27acd8"/><rect x="16.47" y="16.45" width="3.70" height="1.35" fill="#26ade4"/><rect x="21.80" y="16.45" width="3.70" height="1.35" fill="#8fd5bd"/><rect x="25.80" y="16.45" width="1.03" height="1.35" fill="#cdd9ec"/><rect x="27.14" y="16.45" width="1.03" height="1.35" fill="#5fce90"/><rect x="28.47" y="16.45" width="62.37" height="1.35" fill="#e9f1e4"/><rect x="91.14" y="16.45" width="1.03" height="1.35" fill="#5fce90"/><rect x="92.48" y="16.45" width="1.03" height="1.35" fill="#cdd9ec"/><rect x="95.14" y="16.45" width="1.03" height="1.35" fill="#5fce90"/><rect x="96.48" y="16.45" width="5.03" height="1.35" fill="#e9f1e4"/><rect x="101.81" y="16.45" width="1.03" height="1.35" fill="#5fce90"/><rect x="103.15" y="16.45" width="1.03" height="1.35" fill="#cdd9ec"/><rect x="105.81" y="16.45" width="1.03" height="1.35" fill="#5fce90"/><rect x="107.15" y="16.45" width="5.03" height="1.35" fill="#e9f1e4"/><rect x="112.48" y="16.45" width="1.03" height="1.35" fill="#5fce90"/><rect x="113.81" y="16.45" width="2.37" height="1.35" fill="#cdd9ec"/><rect x="7.13" y="19.12" width="1.03" height="1.35" fill="#cdd9ec"/><rect x="8.47" y="19.12" width="6.37" height="1.35" fill="#26ade4"/><rect x="15.13" y="19.12" width="1.03" height="1.35" fill="#cdd9ec"/><rect x="16.47" y="19.12" width="11.70" height="1.35" fill="#8fd5bd"/><rect x="29.80" y="19.12" width="5.03" height="1.35" fill="#cdd9ec"/><rect x="12.47" y="21.78" width="3.70" height="1.35" fill="#26ade4"/><rect x="16.47" y="21.78" width="1.03" height="1.35" fill="#cdd9ec"/><rect x="17.80" y="21.78" width="1.03" height="1.35" fill="#5fce90"/><rect x="19.14" y="21.78" width="3.70" height="1.35" fill="#e9f1e4"/><rect x="24.47" y="21.78" width="7.70" height="1.35" fill="#e9f1e4"/><rect x="33.80" y="21.78" width="1.03" height="1.35" fill="#e9f1e4"/><rect x="36.47" y="21.78" width="3.70" height="1.35" fill="#e9f1e4"/><rect x="41.80" y="21.78" width="9.03" height="1.35" fill="#e9f1e4"/><rect x="52.47" y="21.78" width="1.03" height="1.35" fill="#e9f1e4"/><rect x="55.14" y="21.78" width="1.03" height="1.35" fill="#5fce90"/><rect x="57.81" y="21.78" width="1.03" height="1.35" fill="#27acd8"/><rect x="60.47" y="21.78" width="2.37" height="1.35" fill="#cdd9ec"/><rect x="63.14" y="21.78" width="2.37" height="1.35" fill="#27acd8"/><rect x="65.81" y="21.78" width="13.03" height="1.35" fill="#86a5ea"/><rect x="79.14" y="21.78" width="5.03" height="1.35" fill="#cdd9ec"/><rect x="7.13" y="24.45" width="1.03" height="1.35" fill="#cdd9ec"/></svg>
<div style="position:absolute;left:1901.00px;top:76.00px;width:19.00px;height:897.00px;background:#0a3b63;"></div>
<div style="position:absolute;left:1901.00px;top:192.30px;width:19.00px;height:2.20px;background:#1d5f92;"></div>
<div style="position:absolute;left:1901.00px;top:973.00px;width:1.00px;height:197.67px;background:#0a2238;"></div>
<div style="position:absolute;left:405.00px;top:76.00px;width:3.00px;height:2.00px;background:#5f8fb8;"></div>
<div style="position:absolute;left:0.00px;top:1172.00px;width:1920.00px;height:28.00px;background:#229ed6;"></div>
<div style="position:absolute;left:0.00px;top:1171.00px;width:1920.00px;height:1.00px;background:#0f4f72;"></div>
<div style="position:absolute;left:0.00px;top:1172.00px;width:1920.00px;height:1.00px;background:#279de0;"></div>
<svg style="position:absolute;left:18.60px;top:1174.50px;color:#fff;" width="21.33" height="21.33" viewBox="0 0 16 16" fill="#fff"><circle cx="8" cy="8" r="5.75" fill="none" stroke="currentColor" stroke-width="1"/><path d="M5.8 5.800l4.400 4.400M10.200 5.800l-4.400 4.400" stroke="currentColor" stroke-width="1" fill="none"/></svg>
<div style="position:absolute;left:43.50px;top:1171.17px;height:29.33px;line-height:29.33px;font-size:16.00px;color:#fff;letter-spacing:0.000px;font-weight:normal;white-space:pre;font-family:'Liberation Sans',sans-serif;">0</div>
<svg style="position:absolute;left:56.50px;top:1174.30px;color:#fff;" width="21.33" height="21.33" viewBox="0 0 16 16" fill="#fff"><path d="M8 3L13.300 12.800H2.700z" fill="none" stroke="currentColor" stroke-width="1" stroke-linejoin="miter"/><path d="M8 6.500v3.500" stroke="currentColor" stroke-width="1"/><circle cx="8" cy="11.300" r=".6"/></svg>
<div style="position:absolute;left:81.50px;top:1171.17px;height:29.33px;line-height:29.33px;font-size:16.00px;color:#fff;letter-spacing:0.000px;font-weight:normal;white-space:pre;font-family:'Liberation Sans',sans-serif;">0</div>
<div style="position:absolute;left:1471.30px;top:1171.17px;height:29.33px;line-height:29.33px;font-size:16.00px;color:#fff;letter-spacing:0.300px;font-weight:normal;white-space:pre;font-family:'Liberation Sans',sans-serif;">L 7, col 84</div>
<div style="position:absolute;left:1570.20px;top:1171.17px;height:29.33px;line-height:29.33px;font-size:16.00px;color:#fff;letter-spacing:0.240px;font-weight:normal;white-space:pre;font-family:'Liberation Sans',sans-serif;">Espaces : 4</div>
<div style="position:absolute;left:1678.80px;top:1171.17px;height:29.33px;line-height:29.33px;font-size:16.00px;color:#fff;letter-spacing:0.510px;font-weight:normal;white-space:pre;font-family:'Liberation Sans',sans-serif;">UTF-8</div>
<div style="position:absolute;left:1749.00px;top:1171.17px;height:29.33px;line-height:29.33px;font-size:16.00px;color:#fff;letter-spacing:-1.440px;font-weight:normal;white-space:pre;font-family:'Liberation Sans',sans-serif;">LF</div>
<div style="position:absolute;left:1788.50px;top:1171.17px;height:29.33px;line-height:29.33px;font-size:16.00px;color:#fff;letter-spacing:-0.940px;font-weight:normal;white-space:pre;font-family:'Liberation Sans',sans-serif;">PHP</div>
<svg style="position:absolute;left:1840.50px;top:1174.50px;color:#fff;" width="21.33" height="21.33" viewBox="0 0 16 16" fill="#fff"><path d="M4.900 4.700V2.100h9v6h-1.900l-1.900 1.900V8.100" fill="none" stroke="currentColor" stroke-width="1"/><circle cx="5.700" cy="7.900" r="2.050" fill="none" stroke="currentColor" stroke-width="1"/><path d="M1.500 14.500c.1-2.700 1.900-4.300 4.200-4.300s4.100 1.600 4.200 4.300" fill="none" stroke="currentColor" stroke-width="1"/></svg>
<svg style="position:absolute;left:1881.00px;top:1174.50px;color:#fff;" width="21.33" height="21.33" viewBox="0 0 16 16" fill="#fff"><path d="M8.300 2.200C5.700 2.100 4 4.100 4 6.500v3.400l-1.100 2.300h10.100l-1-2.100V8.600" fill="none" stroke="currentColor" stroke-width="1" stroke-linejoin="round"/><path d="M6.700 12.400c0 .8.600 1.300 1.300 1.300s1.300-.5 1.300-1.300" fill="none" stroke="currentColor" stroke-width="1"/><circle cx="11" cy="4.500" r="2.500"/></svg>
</div></body></html>
